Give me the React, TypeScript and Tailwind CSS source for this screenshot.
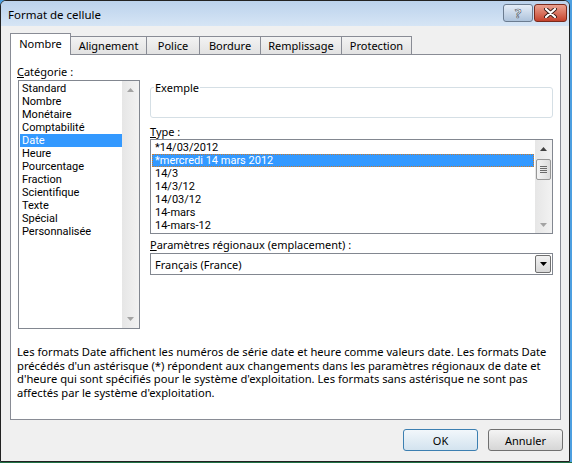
import React from "react";

const categories = [
  "Standard",
  "Nombre",
  "Monétaire",
  "Comptabilité",
  "Date",
  "Heure",
  "Pourcentage",
  "Fraction",
  "Scientifique",
  "Texte",
  "Spécial",
  "Personnalisée",
];

const types = [
  "*14/03/2012",
  "*mercredi 14 mars 2012",
  "14/3",
  "14/3/12",
  "14/03/12",
  "14-mars",
  "14-mars-12",
];

const tabs = [
  { label: "Nombre", w: "w-[61px]", active: true },
  { label: "Alignement", w: "w-[77px]" },
  { label: "Police", w: "w-[54px]" },
  { label: "Bordure", w: "w-[62px]" },
  { label: "Remplissage", w: "w-[82px]" },
  { label: "Protection", w: "w-[71px]" },
];

function Arrow({ up, color }: { up?: boolean; color: string }) {
  return (
    <svg width="7" height="4" viewBox="0 0 7 4">
      <polygon points={up ? "3.5,0 7,4 0,4" : "0,0 7,0 3.5,4"} fill={color} />
    </svg>
  );
}

function TitleButtons() {
  return (
    <div className="flex gap-px pt-[3px] pr-[2px]">
      <div className="w-[30px] h-[18px] rounded-[3px] border border-[#6b7c90] bg-gradient-to-b from-[#e6eef8] to-[#aec3db] flex items-center justify-center text-[13px] font-bold leading-none text-white [-webkit-text-stroke:0.6px_#3d4a5a]">
        ?
      </div>
      <div className="w-[33px] h-[18px] rounded-[3px] border border-[#7a2a1c] bg-gradient-to-b from-[#eaa190] to-[#c4412c] flex items-center justify-center">
        <svg width="13" height="10" viewBox="0 0 13 10">
          <path d="M2 1 L11 9 M11 1 L2 9" stroke="#3a1d18" strokeWidth="4" strokeLinecap="round" />
          <path d="M2 1 L11 9 M11 1 L2 9" stroke="#ffffff" strokeWidth="2.2" strokeLinecap="round" />
        </svg>
      </div>
    </div>
  );
}

export default function App() {
  return (
    <div className="w-[572px] h-[463px] flex flex-col bg-[#4d9fe0] font-['Noto_Sans',sans-serif] text-[11px] text-black">
      <div className="w-[570px] h-[462px] flex flex-col border border-[#222] rounded-t-[6px] overflow-hidden bg-[#f0f0f0]">
        {/* Title bar */}
        <div className="h-[25px] shrink-0 flex items-start justify-between bg-gradient-to-b from-[#bbd2ec] to-[#d6e5f5]">
          <span className="pl-[7px] pt-[6px] leading-[15px] text-[11.5px]">Format de cellule</span>
          <TitleButtons />
        </div>

        {/* Tabs */}
        <div className="mt-[7px] ml-[9px] h-[21px] flex items-end">
          {tabs.map((t) =>
            t.active ? (
              <div
                key={t.label}
                className={`${t.w} h-[22px] -mb-px relative z-10 bg-white border border-b-0 border-[#898c95] flex justify-center pt-[2px] leading-[15px]`}
              >
                {t.label}
              </div>
            ) : (
              <div
                key={t.label}
                className={`${t.w} h-[18px] -ml-px bg-gradient-to-b from-[#f3f3f3] to-[#e2e2e2] border border-b-0 border-[#898c95] flex items-center justify-center leading-[15px]`}
              >
                {t.label}
              </div>
            )
          )}
        </div>

        {/* Panel */}
        <div className="ml-[9px] w-[551px] h-[366px] border border-[#898c95] bg-white flex flex-col">
          <div className="flex pt-[9px] pl-[6px]">
            {/* Category column */}
            <div className="w-[123px] flex flex-col">
              <div className="h-[15px] leading-[15px]">
                <span className="underline">C</span>atégorie :
              </div>
              <div className="mt-[1px] ml-px w-[122px] h-[249px] border border-[#828790] flex">
                <div className="w-[103px] pt-px font-['Roboto',sans-serif]">
                  {categories.map((c) => (
                    <div
                      key={c}
                      className={`h-[13px] leading-[13px] ml-px pl-[2px] ${c === "Date" ? "bg-[#3399ff] text-white" : ""}`}
                    >
                      {c}
                    </div>
                  ))}
                </div>
                <div className="w-[17px] bg-gradient-to-r from-[#e6e6e6] to-[#f2f2f2] flex flex-col items-center justify-between py-[7px]">
                  <Arrow up color="#a3a3a3" />
                  <Arrow color="#a3a3a3" />
                </div>
              </div>
            </div>

            {/* Right column */}
            <div className="ml-[10px] w-[403px] flex flex-col">
              <fieldset className="mt-[16px] h-[38px] border border-[#d5dfe5] rounded-[3px] px-[3px]">
                <legend className="px-px leading-[15px]">Exemple</legend>
              </fieldset>

              <div className="mt-[6px] h-[15px] leading-[15px]">
                <span className="underline">T</span>ype :
              </div>
              <div className="h-[95px] border border-[#828790] flex">
                <div className="flex-1 pt-px font-['Roboto',sans-serif]">
                  {types.map((t, i) => (
                    <div
                      key={t}
                      className={`h-[13px] leading-[11px] mx-px pl-[2px] border border-transparent ${
                        i === 1 ? "bg-[#3399ff] text-white border-dotted !border-[#cc7a2a]" : ""
                      }`}
                    >
                      {t}
                    </div>
                  ))}
                </div>
                <div className="w-[17px] bg-gradient-to-r from-[#e6e6e6] to-[#f2f2f2] flex flex-col items-center">
                  <div className="h-[17px] flex items-center justify-center">
                    <Arrow up color="#404040" />
                  </div>
                  <div className="mt-[2px] w-[15px] h-[21px] rounded-[2px] border border-[#979797] bg-gradient-to-r from-[#f4f4f4] to-[#dcdcdc] flex flex-col items-center justify-center gap-px">
                    <div className="w-[7px] h-px bg-[#6a6a6a]" />
                    <div className="w-[7px] h-px bg-[#6a6a6a]" />
                    <div className="w-[7px] h-px bg-[#6a6a6a]" />
                    <div className="w-[7px] h-px bg-[#6a6a6a]" />
                  </div>
                  <div className="mt-auto h-[17px] flex items-center justify-center">
                    <Arrow color="#a3a3a3" />
                  </div>
                </div>
              </div>

              <div className="mt-[3px] h-[15px] leading-[15px] whitespace-nowrap">
                <span className="underline">P</span>aramètres régionaux (emplacement) :
              </div>
              <div className="mt-[1px] h-[22px] border border-[#828790] flex items-center justify-between pl-[4px] pr-px">
                <span className="leading-[15px]">Français (France)</span>
                <div className="w-[16px] h-[18px] rounded-[2px] border border-[#707070] bg-gradient-to-b from-[#f2f2f2] to-[#d8d8d8] flex items-center justify-center">
                  <Arrow color="#000" />
                </div>
              </div>
            </div>
          </div>

          <p className="mt-[16px] pl-[6px] leading-[13.7px] whitespace-nowrap text-[11.2px]">
            Les formats Date affichent les numéros de série date et heure comme valeurs date. Les formats Date
            <br />
            précédés d'un astérisque (*) répondent aux changements dans les paramètres régionaux de date et
            <br />
            d'heure qui sont spécifiés pour le système d'exploitation. Les formats sans astérisque ne sont pas
            <br />
            affectés par le système d'exploitation.
          </p>
        </div>

        {/* Buttons */}
        <div className="mt-[9px] pr-[6px] flex justify-end gap-[10px]">
          <button className="w-[75px] h-[22px] rounded-[3px] border border-[#3c7fb1] bg-gradient-to-b from-[#f2f7fb] to-[#d3e3ef] leading-[15px]">
            OK
          </button>
          <button className="w-[75px] h-[22px] rounded-[3px] border border-[#707070] bg-gradient-to-b from-[#f4f4f4] to-[#d6d6d6] leading-[15px]">
            Annuler
          </button>
        </div>
      </div>
      <div className="h-px bg-[#217346]" />
    </div>
  );
}
